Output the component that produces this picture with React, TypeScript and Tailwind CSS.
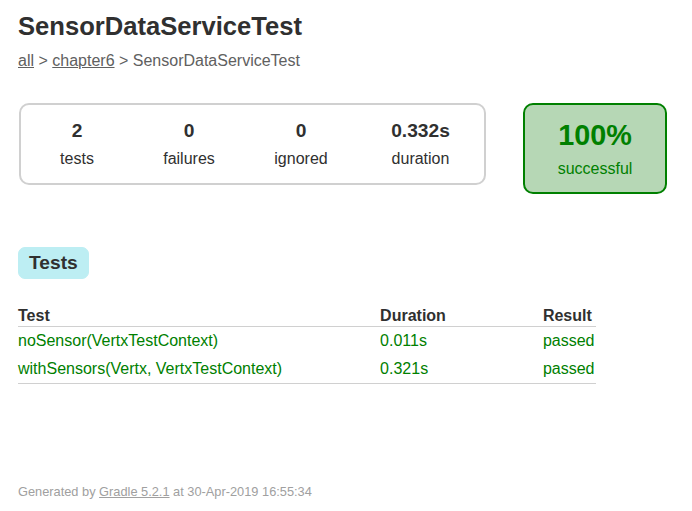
const SUMMARY = [
  { value: "2", label: "tests", width: "w-[112px]" },
  { value: "0", label: "failures", width: "w-[112px]" },
  { value: "0", label: "ignored", width: "w-[112px]" },
  { value: "0.332s", label: "duration", width: "w-[127px]" },
];

const TESTS = [
  { name: "noSensor(VertxTestContext)", duration: "0.011s", result: "passed" },
  { name: "withSensors(Vertx, VertxTestContext)", duration: "0.321s", result: "passed" },
];

const App = () => {
  return (
    <div className="min-h-screen bg-white pl-[18px] pt-[12px] font-['Liberation_Sans',Arial,sans-serif] text-base text-[#303030]">
      {/* Header */}
      <h1 className="mb-[11px] whitespace-nowrap text-[25.6px] font-bold leading-[29px]">
        SensorDataServiceTest
      </h1>
      <div className="leading-[18px] text-[#606060]">
        <a href="#" className="underline">all</a> &gt;{" "}
        <a href="#" className="underline">chapter6</a> &gt; SensorDataServiceTest
      </div>

      {/* Summary */}
      <div className="ml-px mt-[33px] flex items-start">
        <div className="flex rounded-[10px] border-2 border-[#d0d0d0]">
          {SUMMARY.map((item) => (
            <div key={item.label} className={`${item.width} py-[15px] text-center`}>
              <div className="mb-2 text-[19.2px] font-bold leading-[22px]">{item.value}</div>
              <p className="leading-[18px]">{item.label}</p>
            </div>
          ))}
        </div>
        <div className="ml-[37px] w-[144px] rounded-[10px] border-2 border-[#008000] bg-[#b6d7b5] py-[14px] text-center text-[#008000]">
          <div className="mb-2 text-[28.8px] font-bold leading-[33px]">100%</div>
          <p className="leading-[18px]">successful</p>
        </div>
      </div>

      {/* Tabs */}
      <div className="mt-[53px] flex">
        <div className="rounded-[7px] border border-[#bdeef3] bg-[#bdeef3] px-[10px] py-[5px] text-[19.2px] font-bold leading-[20px]">
          Tests
        </div>
      </div>

      <table className="mt-[27px] border-collapse border-b border-[#d0d0d0]">
        <thead>
          <tr>
            <th className="whitespace-nowrap border-b border-[#d0d0d0] py-px pl-0 text-left font-bold leading-[18px]">Test</th>
            <th className="whitespace-nowrap border-b border-[#d0d0d0] py-px pl-[98px] text-left font-bold leading-[18px]">Duration</th>
            <th className="whitespace-nowrap border-b border-[#d0d0d0] py-px pl-[97px] pr-[2px] text-left font-bold leading-[18px]">Result</th>
          </tr>
        </thead>
        <tbody className="text-[#008000]">
          {TESTS.map((t) => (
            <tr key={t.name}>
              <td className="whitespace-nowrap py-[5px] pl-0 leading-[18px]">{t.name}</td>
              <td className="whitespace-nowrap py-[5px] pl-[98px] leading-[18px]">{t.duration}</td>
              <td className="whitespace-nowrap py-[5px] pl-[97px] pr-[2px] leading-[18px]">{t.result}</td>
            </tr>
          ))}
        </tbody>
      </table>

      {/* Footer */}
      <div className="mt-[100px] whitespace-nowrap text-[12.8px] leading-[15px] text-[#a0a0a0]">
        Generated by <a href="#" className="underline">Gradle 5.2.1</a> at 30-Apr-2019 16:55:34
      </div>
    </div>
  );
};

export default App;
